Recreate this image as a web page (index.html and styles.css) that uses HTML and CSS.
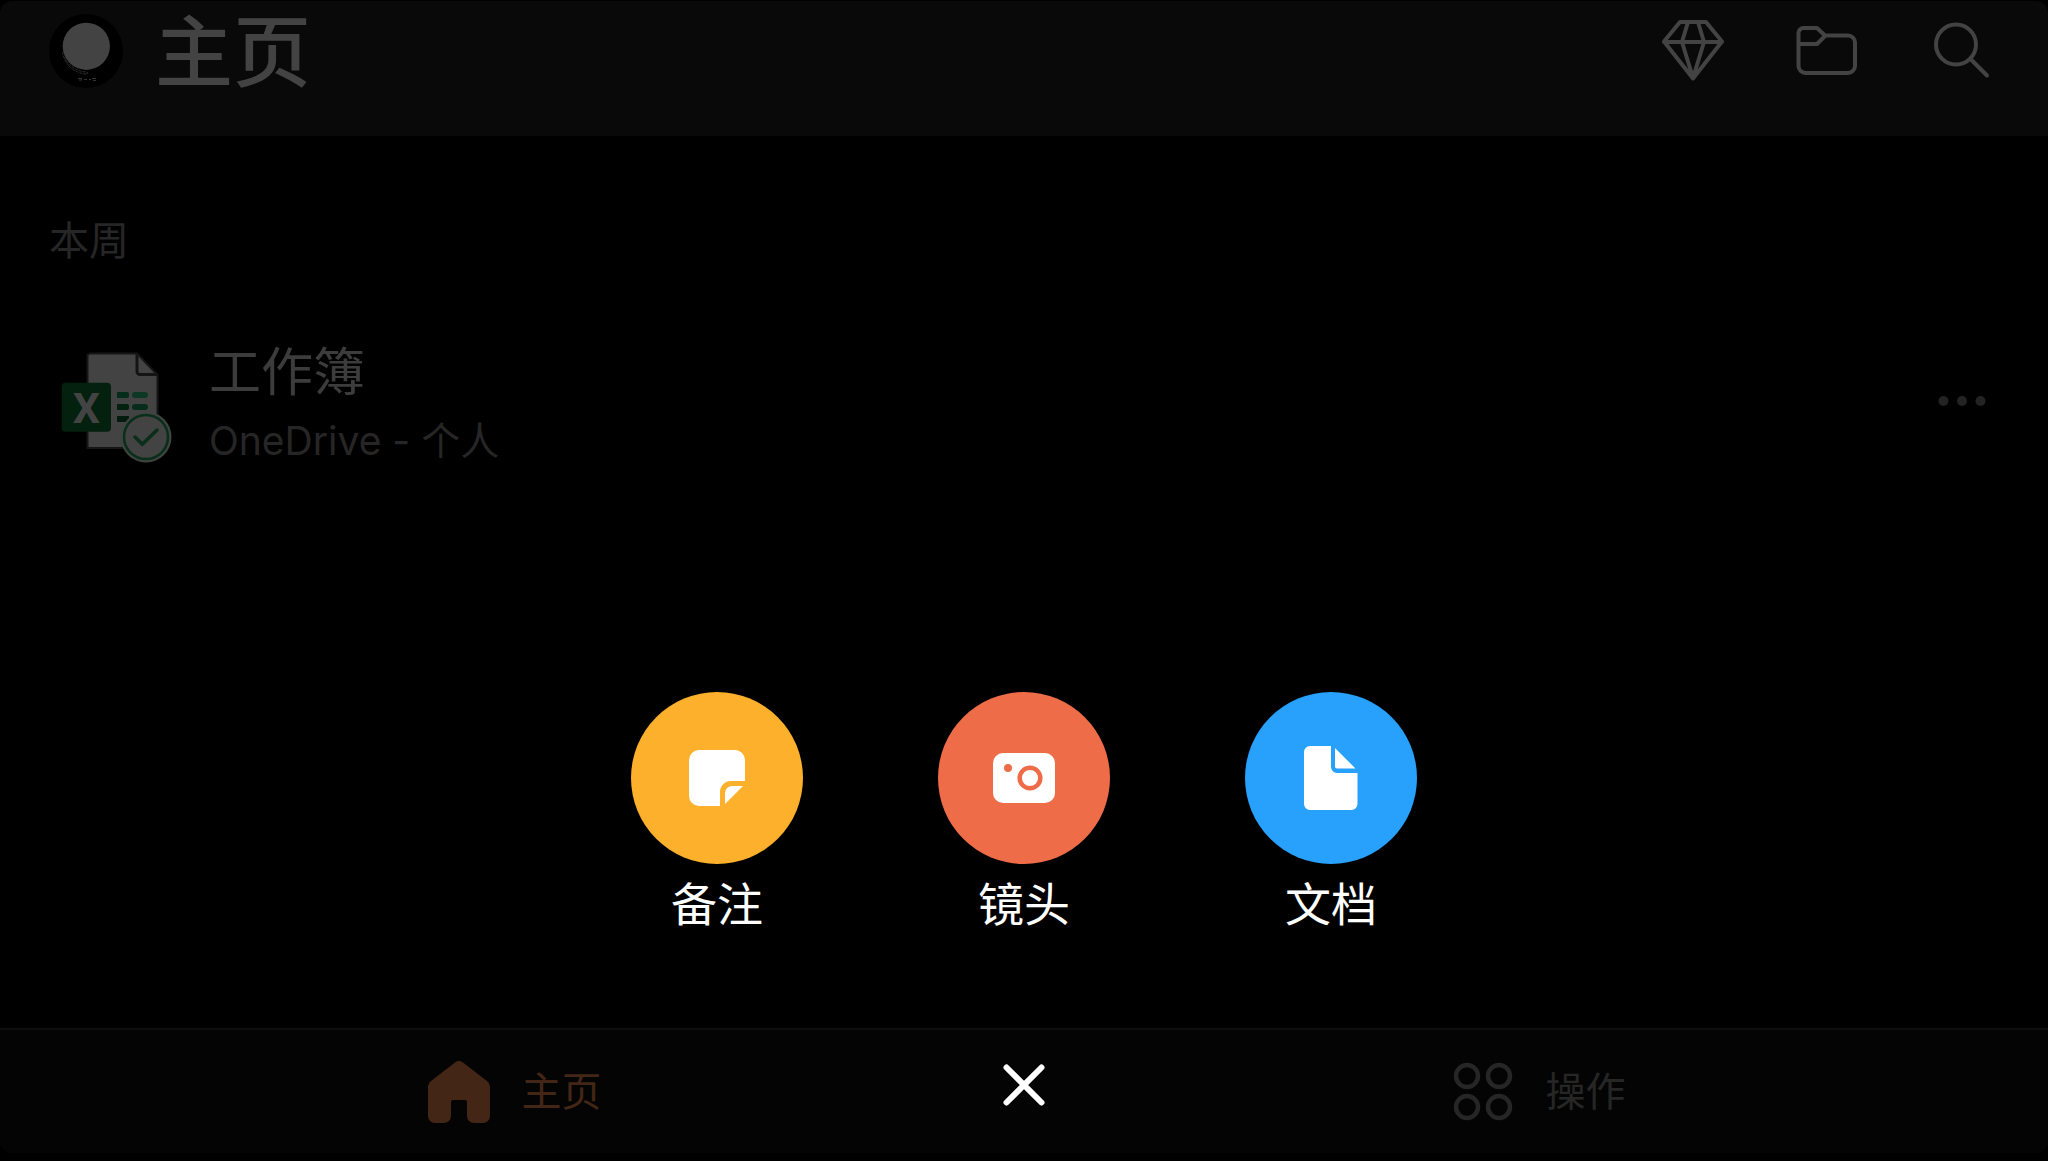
FILE: index.html
```
<!DOCTYPE html>
<html lang="zh-CN">
<head>
  <meta charset="UTF-8">
  <meta name="viewport" content="width=device-width, initial-scale=1.0">
  <title>主页</title>
  <link rel="stylesheet" href="styles.css">
</head>
<body>
  <header class="header">
    <button class="avatar" aria-label="account">
      <svg width="74" height="74" viewBox="0 0 74 74">
        <circle cx="37" cy="37" r="37" fill="#000"/>
        <circle cx="37.3" cy="32.3" r="23.6" fill="#434343"/>
        <path d="M13.6 38a25 25 0 0 0 24.6 22M15.5 43a25 25 0 0 0 22.7 15v2" fill="none" stroke="#3a3a3a" stroke-width="0.8" stroke-dasharray="3 1"/>
        <path d="M29 64.5h4M30 66h3M35 65.5h3M40 65.5h2M43 64.5h4M44 66.5h3" stroke="#343434" stroke-width="1"/>
      </svg>
    </button>
    <h1 class="title">主页</h1>
    <div class="tools">
      <button class="tool" aria-label="premium">
        <svg width="64" height="64" viewBox="0 0 64 64">
          <path d="M19 3h26l16 19.500-29 37L3 22.500zM3 23h58M27 3l-6 20 11 36 11-36-6-20"/>
        </svg>
      </button>
      <button class="tool" aria-label="folder">
        <svg width="64" height="64" viewBox="0 0 64 64">
          <path d="M3.500 14a5 5 0 0 1 5-5H22l8 7.500h23a7 7 0 0 1 7 7V47a7 7 0 0 1-7 7H10.500a7 7 0 0 1-7-7zM3.500 25H22l8-8"/>
        </svg>
      </button>
      <button class="tool" aria-label="search">
        <svg width="64" height="64" viewBox="0 0 64 64">
          <circle cx="27" cy="25.500" r="20"/>
          <path d="M41.500 40L58 56.500"/>
        </svg>
      </button>
    </div>
  </header>

  <main class="main">
    <h2 class="section">本周</h2>
    <div class="file">
      <svg class="file-icon" width="114" height="116" viewBox="0 0 114 116">
        <path d="M30 4.500h47L97.500 26v73H27.500V6z" fill="#434343" stroke="#161616" stroke-width="2"/>
        <path d="M77 5v17.500a3 3 0 0 0 3 3h17.500" fill="none" stroke="#141414" stroke-width="3"/>
        <path d="M57 43h10a2 2 0 0 1 2 2v2a2 2 0 0 1-2 2H57z" fill="#062d1b"/>
        <rect x="72" y="43" width="16" height="6" rx="3" fill="#0c3824"/>
        <path d="M57 55h10a2 2 0 0 1 2 2v2a2 2 0 0 1-2 2H57z" fill="#04200f"/>
        <rect x="72" y="55" width="16" height="6" rx="3" fill="#062d1b"/>
        <path d="M57 67h12v6H57z" fill="#041c10"/>
        <rect x="1.700" y="33.700" width="49.300" height="49" rx="4" fill="#04200f"/>
        <text class="file-letter" x="26.500" y="73.500" text-anchor="middle">X</text>
        <circle cx="86" cy="88" r="25.500" fill="#3f4441"/>
        <circle cx="86" cy="88" r="22" fill="#434343" stroke="#0a2e1c" stroke-width="2.500"/>
        <path d="M75 88l7.300 7.300L97 81" fill="none" stroke="#0a2e1c" stroke-width="3.500" stroke-linecap="round" stroke-linejoin="round"/>
      </svg>
      <div class="file-info">
        <div class="file-name">工作簿</div>
        <div class="file-place">OneDrive - 个人</div>
      </div>
      <button class="more" aria-label="more">
        <svg width="48" height="12" viewBox="0 0 48 12">
          <circle cx="5.500" cy="6" r="5"/>
          <circle cx="24" cy="6" r="5"/>
          <circle cx="42.500" cy="6" r="5"/>
        </svg>
      </button>
    </div>

    <div class="actions">
      <button class="action">
        <span class="circle note">
          <svg width="64" height="64" viewBox="0 0 64 64">
            <path d="M14 4h36a10 10 0 0 1 10 10v21H46a11 11 0 0 0-11 11v14H14A10 10 0 0 1 4 50V14A10 10 0 0 1 14 4z"/>
            <path d="M58 40L40 58V47a7 7 0 0 1 7-7z"/>
          </svg>
        </span>
        备注
      </button>
      <button class="action">
        <span class="circle lens">
          <svg width="64" height="64" viewBox="0 0 64 64">
            <rect x="1" y="7" width="62" height="50" rx="10"/>
            <circle cx="16" cy="22" r="4" fill="#ef6c48"/>
            <circle cx="38" cy="32" r="10.300" stroke="#ef6c48" stroke-width="4.500"/>
          </svg>
        </span>
        镜头
      </button>
      <button class="action">
        <span class="circle doc">
          <svg width="64" height="64" viewBox="0 0 64 64">
            <path d="M11 0h21v21a6 6 0 0 0 6 6h20.500v31a6 6 0 0 1-6 6H11a6 6 0 0 1-6-6V6a6 6 0 0 1 6-6z"/>
            <path d="M36 2l20.500 20.500H38a2 2 0 0 1-2-2z"/>
          </svg>
        </span>
        文档
      </button>
    </div>
  </main>

  <nav class="nav">
    <a class="tab active" href="#">
      <svg width="62" height="62" viewBox="0 0 62 62">
        <path d="M27 1.500a6 6 0 0 1 8 0L59 20a7 7 0 0 1 3 6v29a7 7 0 0 1-7 7H46a7 7 0 0 1-7-7V41a2 2 0 0 0-2-2H25a2 2 0 0 0-2 2v14a7 7 0 0 1-7 7H7a7 7 0 0 1-7-7V26a7 7 0 0 1 3-6z" fill="#432616"/>
      </svg>
      主页
    </a>
    <a class="tab" href="#">
      <svg width="62" height="62" viewBox="0 0 62 62" fill="none" stroke="#262626" stroke-width="4.500">
        <circle cx="15" cy="15" r="11"/>
        <circle cx="47" cy="15" r="11"/>
        <circle cx="15" cy="46" r="11"/>
        <circle cx="47" cy="46" r="11"/>
      </svg>
      操作
    </a>
    <button class="close" aria-label="close">
      <svg width="44" height="44" viewBox="0 0 44 44">
        <path d="M4.500 4.500l35 35M39.500 4.500l-35 35"/>
      </svg>
    </button>
  </nav>
</body>
</html>
```
FILE: styles.css
```
* {
  box-sizing: border-box;
}
body {
  margin: 0;
  padding: 1px 0 8px;
  min-height: 100vh;
  display: flex;
  flex-direction: column;
  background: #000;
  color: #262626;
  font-family: Inter, "Noto Sans CJK SC", sans-serif;
  font-size: 40px;
  line-height: 56px;
}
button {
  border: 0;
  padding: 0;
  background: none;
  color: inherit;
  font: inherit;
  cursor: pointer;
}
svg {
  display: block;
}
.header {
  display: flex;
  align-items: center;
  height: 135px;
  padding: 0 55px 36px 49px;
  background: #090909;
  border-radius: 12px 12px 0 0;
}
.title {
  margin: 0 0 0 32px;
  padding-top: 4px;
  color: #434343;
  font-size: 78px;
  line-height: 96px;
  font-weight: 500;
}
.tools {
  display: flex;
  gap: 70px;
  margin-left: auto;
}
.tool svg {
  fill: none;
  stroke: #434343;
  stroke-width: 4;
  stroke-linecap: round;
  stroke-linejoin: round;
}
.main {
  flex: 1;
  display: flex;
  flex-direction: column;
}
.section {
  margin: 77px 0 0 49px;
  font-size: 40px;
  font-weight: 400;
}
.file {
  display: flex;
  align-items: center;
  margin-top: 68px;
  padding: 0 62px 0 60px;
}
.file-icon {
  margin-top: 4px;
}
.file-letter {
  fill: #434343;
  font-family: Roboto, sans-serif;
  font-size: 43px;
  font-weight: 700;
}
.file-info {
  margin-left: 35px;
}
.file-name {
  color: #3c3c3c;
  font-size: 52px;
  line-height: 72px;
}
.file-place {
  font-size: 39px;
  line-height: 64px;
}
.more {
  margin: 0 0 8px auto;
}
.more svg {
  fill: #232323;
}
/* floating "create new" buttons above the tab bar */
.actions {
  display: flex;
  justify-content: center;
  gap: 135px;
  margin-top: auto;
  padding-bottom: 92px;
}
.action {
  display: flex;
  flex-direction: column;
  align-items: center;
  gap: 8px;
  color: #fff;
  font-size: 46px;
  line-height: 64px;
}
.circle {
  display: flex;
  align-items: center;
  justify-content: center;
  width: 172px;
  height: 172px;
  border-radius: 50%;
}
.circle svg {
  fill: #fff;
}
.note {
  background: #fdb02c;
}
.lens {
  background: #ef6c48;
}
.doc {
  background: #27a1fc;
}
.nav {
  position: relative;
  display: grid;
  grid-template-columns: 1fr 1fr;
  height: 125px;
  border-top: 2px solid #0e0e0e;
  border-radius: 0 0 12px 12px;
  background: #040404;
}
.tab {
  display: flex;
  align-items: center;
  justify-content: center;
  gap: 32px;
  padding-left: 5px;
  color: inherit;
  text-decoration: none;
}
.active {
  color: #432616;
}
.close {
  position: absolute;
  top: 33px;
  left: 50%;
  transform: translateX(-50%);
}
.close svg {
  fill: none;
  stroke: #fff;
  stroke-width: 6;
  stroke-linecap: round;
}
```
